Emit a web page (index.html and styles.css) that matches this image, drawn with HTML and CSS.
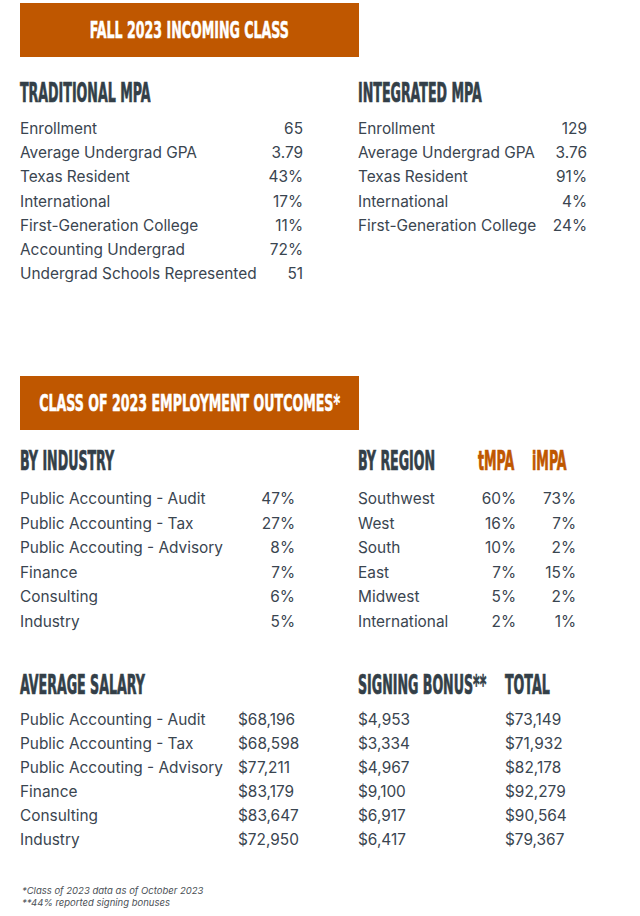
FILE: index.html
```html
<!DOCTYPE html>
<html lang="en">
<head>
<meta charset="utf-8">
<title>MPA Class Profile</title>
<link rel="stylesheet" href="styles.css">
</head>
<body>
<div class="page">
  <section class="incoming">
    <div class="banner"><span class="banner-text">FALL 2023 INCOMING CLASS</span></div>
    <div class="two">
      <div class="col">
        <h2 class="h"><span class="hs">TRADITIONAL MPA</span></h2>
        <div class="kv kv-trad">
          <div class="row"><span>Enrollment</span><span>65</span></div>
          <div class="row"><span>Average Undergrad GPA</span><span>3.79</span></div>
          <div class="row"><span>Texas Resident</span><span>43%</span></div>
          <div class="row"><span>International</span><span>17%</span></div>
          <div class="row"><span>First-Generation College</span><span>11%</span></div>
          <div class="row"><span>Accounting Undergrad</span><span>72%</span></div>
          <div class="row"><span>Undergrad Schools Represented</span><span>51</span></div>
        </div>
      </div>
      <div class="col">
        <h2 class="h"><span class="hs">INTEGRATED MPA</span></h2>
        <div class="kv kv-int">
          <div class="row"><span>Enrollment</span><span>129</span></div>
          <div class="row"><span>Average Undergrad GPA</span><span>3.76</span></div>
          <div class="row"><span>Texas Resident</span><span>91%</span></div>
          <div class="row"><span>International</span><span>4%</span></div>
          <div class="row"><span>First-Generation College</span><span>24%</span></div>
        </div>
      </div>
    </div>
  </section>

  <section class="outcomes">
    <div class="banner"><span class="banner-text">CLASS OF 2023 EMPLOYMENT OUTCOMES*</span></div>
    <div class="two">
      <div class="col">
        <h2 class="h"><span class="hs">BY INDUSTRY</span></h2>
        <div class="kv kv-ind">
          <div class="row"><span>Public Accounting - Audit</span><span>47%</span></div>
          <div class="row"><span>Public Accounting - Tax</span><span>27%</span></div>
          <div class="row"><span>Public Accouting - Advisory</span><span>8%</span></div>
          <div class="row"><span>Finance</span><span>7%</span></div>
          <div class="row"><span>Consulting</span><span>6%</span></div>
          <div class="row"><span>Industry</span><span>5%</span></div>
        </div>
      </div>
      <div class="col">
        <div class="region-head">
          <h2 class="h"><span class="hs">BY REGION</span></h2>
          <div class="h orange rh-t"><span class="hs">tMPA</span></div>
          <div class="h orange rh-i"><span class="hs">iMPA</span></div>
        </div>
        <div class="region-body">
          <span class="r-l">Southwest</span><span class="r-v">60%</span><span class="r-v">73%</span>
          <span class="r-l">West</span><span class="r-v">16%</span><span class="r-v">7%</span>
          <span class="r-l">South</span><span class="r-v">10%</span><span class="r-v">2%</span>
          <span class="r-l">East</span><span class="r-v">7%</span><span class="r-v">15%</span>
          <span class="r-l">Midwest</span><span class="r-v">5%</span><span class="r-v">2%</span>
          <span class="r-l">International</span><span class="r-v">2%</span><span class="r-v">1%</span>
        </div>
      </div>
    </div>
  </section>

  <section class="salary">
    <div class="sal-head">
      <h2 class="h"><span class="hs">AVERAGE SALARY</span></h2>
      <span></span>
      <h2 class="h"><span class="hs">SIGNING BONUS**</span></h2>
      <h2 class="h"><span class="hs">TOTAL</span></h2>
    </div>
    <div class="sal-body">
      <span>Public Accounting - Audit</span><span>$68,196</span><span>$4,953</span><span>$73,149</span>
      <span>Public Accounting - Tax</span><span>$68,598</span><span>$3,334</span><span>$71,932</span>
      <span>Public Accouting - Advisory</span><span>$77,211</span><span>$4,967</span><span>$82,178</span>
      <span>Finance</span><span>$83,179</span><span>$9,100</span><span>$92,279</span>
      <span>Consulting</span><span>$83,647</span><span>$6,917</span><span>$90,564</span>
      <span>Industry</span><span>$72,950</span><span>$6,417</span><span>$79,367</span>
    </div>
  </section>

  <footer class="notes">
    <p>*Class of 2023 data as of October 2023</p>
    <p>**44% reported signing bonuses</p>
  </footer>
</div>
</body>
</html>
```

FILE: styles.css
```css
* { box-sizing: border-box; }
html, body { margin: 0; padding: 0; background: #ffffff; }
body {
  font-family: "Inter", "Liberation Sans", sans-serif;
  color: #3a4550;
  font-size: 15.4px;
}
.page {
  width: 640px;
  height: 916px;
  padding: 3px 0 0 20px;
  overflow: hidden;
}
.banner {
  width: 339px;
  height: 54px;
  background: #bf5700;
  display: flex;
  align-items: center;
  justify-content: center;
  overflow: hidden;
}
.banner-text {
  display: inline-block;
  white-space: nowrap;
  color: #ffffff;
  font-family: "DejaVu Sans Condensed", "DejaVu Sans", sans-serif;
  font-weight: bold;
  font-size: 23px;
  line-height: 23px;
  transform: scaleX(0.61);
  transform-origin: center;
  margin-top: 1px;
  -webkit-text-stroke: 0.5px #ffffff;
}
.two {
  display: grid;
  grid-template-columns: 338px 1fr;
}
.h {
  margin: 0;
  height: 26px;
  font-family: "DejaVu Sans Condensed", "DejaVu Sans", sans-serif;
  font-weight: bold;
  font-size: 26px;
  line-height: 26px;
  color: #333f48;
  white-space: nowrap;
}
.hs {
  display: inline-block;
  transform: scaleX(0.54);
  transform-origin: left center;
  -webkit-text-stroke: 0.7px currentColor;
}
.orange { color: #bf5700; }
.incoming .h { margin-top: 23px; }
.kv { margin-top: 11px; }
.row {
  display: flex;
  justify-content: space-between;
  height: 24.2px;
  line-height: 24.2px;
  white-space: nowrap;
}
.kv-trad { width: 283px; }
.kv-int { width: 229px; }

.outcomes { margin-top: 90px; }
.outcomes .h { margin-top: 18px; }
.kv-ind { width: 275px; margin-top: 13px; }
.kv-ind .row { height: 24.5px; line-height: 24.5px; }

.region-head,
.region-body {
  display: grid;
  grid-template-columns: 100px 58px 60px;
}
.region-head .rh-t { padding-left: 20px; }
.region-head .rh-i { padding-left: 16px; }
.region-body {
  margin-top: 13px;
  grid-auto-rows: 24.5px;
  line-height: 24.5px;
}
.r-l { white-space: nowrap; }
.r-v { text-align: right; }

.salary { margin-top: 38px; }
.sal-head,
.sal-body {
  display: grid;
  grid-template-columns: 218px 120px 147px 1fr;
}
.sal-head .h { margin-top: 0; }
.sal-body {
  margin-top: 9.4px;
  grid-auto-rows: 24px;
  line-height: 24px;
  white-space: nowrap;
}

.notes {
  margin-top: 33px;
  padding-left: 2px;
  font-size: 9.5px;
  line-height: 12.5px;
  font-style: italic;
  color: #4a4f55;
}
.notes p { margin: 0; }
```
